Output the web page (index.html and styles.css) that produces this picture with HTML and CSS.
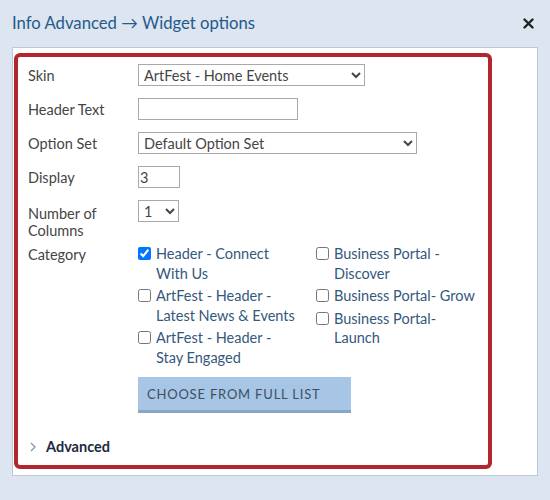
FILE: index.html
```html
<!DOCTYPE html>
<html lang="en">
<head>
  <meta charset="UTF-8">
  <meta name="viewport" content="width=device-width, initial-scale=1.0">
  <title>Widget options</title>
  <link rel="stylesheet" href="styles.css">
</head>
<body>
  <div class="dialog-head">
    <h1>Info Advanced &rarr; Widget options</h1>
    <button class="close" aria-label="Close">
      <svg width="11" height="11" viewBox="0 0 11 11">
        <path d="M1.5 1.5 L9.5 9.5 M9.5 1.5 L1.5 9.5" stroke="#222" stroke-width="2.4" stroke-linecap="round"/>
      </svg>
    </button>
  </div>

  <div class="panel">
    <div class="form-box">
      <div class="row">
        <label>Skin</label>
        <select class="skin">
          <option>ArtFest - Home Events</option>
        </select>
      </div>
      <div class="row">
        <label>Header Text</label>
        <input type="text" class="header-text">
      </div>
      <div class="row">
        <label>Option Set</label>
        <select class="option-set">
          <option>Default Option Set</option>
        </select>
      </div>
      <div class="row">
        <label>Display</label>
        <input type="text" class="display" value="3">
      </div>
      <div class="row">
        <label class="two-line">Number of<br>Columns</label>
        <select class="columns">
          <option>1</option>
        </select>
      </div>
      <div class="row category">
        <label>Category</label>
        <div class="checks">
          <div class="check-col">
            <label class="check"><input type="checkbox" checked><span>Header - Connect With Us</span></label>
            <label class="check"><input type="checkbox"><span>ArtFest - Header - Latest News &amp; Events</span></label>
            <label class="check"><input type="checkbox"><span>ArtFest - Header - Stay Engaged</span></label>
          </div>
          <div class="check-col">
            <label class="check"><input type="checkbox"><span>Business Portal - Discover</span></label>
            <label class="check"><input type="checkbox"><span>Business Portal- Grow</span></label>
            <label class="check"><input type="checkbox"><span>Business Portal- Launch</span></label>
          </div>
        </div>
      </div>
      <div class="row">
        <span></span>
        <button class="full-list">CHOOSE FROM FULL LIST</button>
      </div>
      <div class="advanced">
        <svg width="8" height="12" viewBox="0 0 8 12">
          <path d="M2 2 L6 6 L2 10" fill="none" stroke="#8a96a3" stroke-width="1.3"/>
        </svg>
        <span>Advanced</span>
      </div>
    </div>
  </div>
</body>
</html>
```

FILE: styles.css
```css
body {
  margin: 0;
  background-color: #dce5f0;
  font-family: Lato, "Open Sans", sans-serif;
  font-size: 14.5px;
  color: #454545;
}

.dialog-head {
  display: flex;
  justify-content: space-between;
  align-items: center;
  height: 47px;
  padding: 0 16px 0 12px;
}

.dialog-head h1 {
  margin: 0;
  font-size: 16.7px;
  font-weight: 400;
  color: #245a8c;
  padding-bottom: 2px;
}

.close {
  background: none;
  border: none;
  padding: 0;
  display: flex;
  cursor: pointer;
}

.panel {
  margin-left: 12px;
  width: 523px;
  background-color: white;
  border: 1px solid #bccad8;
  padding: 5px 0 6px 1px;
}

.form-box {
  width: 460px;
  border: 4px solid #b1262f;
  border-radius: 6px;
  padding: 7px 0 8px 10px;
}

.row {
  display: grid;
  grid-template-columns: 110px auto;
  justify-content: start;
  align-items: start;
  margin-bottom: 12px;
}

.row > label {
  padding-top: 4px;
  line-height: 16px;
}

.row > .two-line {
  padding-top: 6px;
  line-height: 16.5px;
}

select,
input[type="text"] {
  font-family: inherit;
  font-size: 14.5px;
  color: #454545;
  background-color: white;
  border: 1px solid #a9a9a9;
  border-radius: 0;
  height: 22px;
  padding: 0 1px;
  margin: 0;
  box-sizing: border-box;
}

.skin { width: 227px; }
.option-set { width: 279px; }
.header-text { width: 160px; height: 23px; }
.display { width: 42px; height: 24px; padding-left: 4px; }
.columns { width: 41px; }

.category {
  margin-top: -9px;
  margin-bottom: 10px;
}

.category > label {
  padding-top: 5px;
}

.checks {
  display: flex;
  gap: 18px;
  padding-top: 2px;
}

.check-col {
  display: flex;
  flex-direction: column;
  gap: 3px;
  width: 160px;
}

.check {
  display: flex;
  align-items: flex-start;
  line-height: 19.5px;
  color: #34587c;
}

.check input {
  width: 13px;
  height: 13px;
  margin: 3px 5px 0 0;
  flex-shrink: 0;
}

.full-list {
  width: 213px;
  height: 36px;
  padding: 0 0 0 9px;
  text-align: left;
  background-color: #a7c5e4;
  border: none;
  border-bottom: 3px solid #8ba6c2;
  color: #3e4f63;
  font-family: inherit;
  font-size: 13px;
  letter-spacing: 0.8px;
  cursor: pointer;
}

.advanced {
  display: flex;
  align-items: center;
  gap: 9px;
  padding-left: 1px;
  margin-top: 24px;
  line-height: 20px;
  color: #1c2b3e;
  font-weight: 700;
}
```
